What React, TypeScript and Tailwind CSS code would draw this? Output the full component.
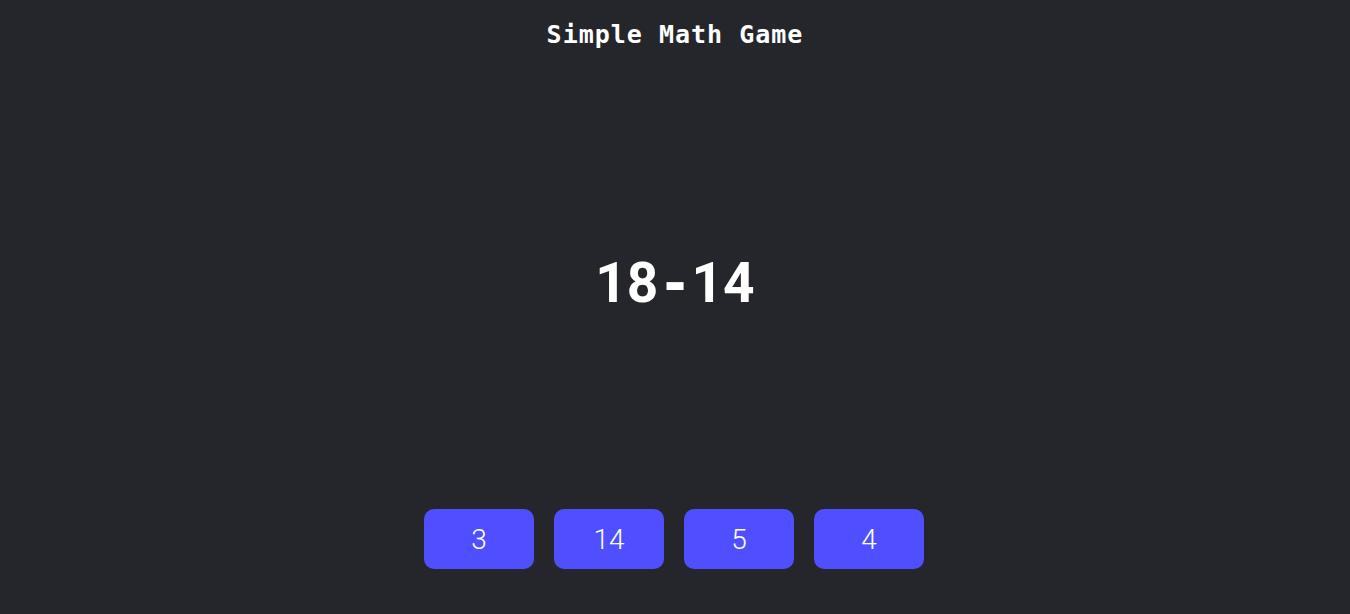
import { useState } from 'react'

const App = () => {
  const [options] = useState<number[]>([3, 14, 5, 4])

  return (
    <div className="flex flex-col w-full h-screen bg-[#25262b] text-white">
      <h1 className="pt-[18px] text-center text-[25px] leading-[34px] font-bold tracking-[1px] font-['DejaVu_Sans_Mono',monospace]">
        Simple Math Game
      </h1>
      <div className="flex flex-1 items-center justify-center pt-[6px]">
        <div className="text-[55px] leading-none font-bold font-['Roboto',sans-serif]">
          18<span className="font-['DejaVu_Sans_Mono',monospace]">-</span>14
        </div>
      </div>
      <div className="flex justify-center gap-5 pb-[45px] pr-[2px]">
        {options.map((n, i) => (
          <button
            key={i}
            className="w-[110px] h-[60px] rounded-[10px] bg-[#4f4fff] text-[28px] leading-none font-light font-['Roboto',sans-serif] pt-[2px]"
          >
            {n}
          </button>
        ))}
      </div>
    </div>
  )
}

export default App
